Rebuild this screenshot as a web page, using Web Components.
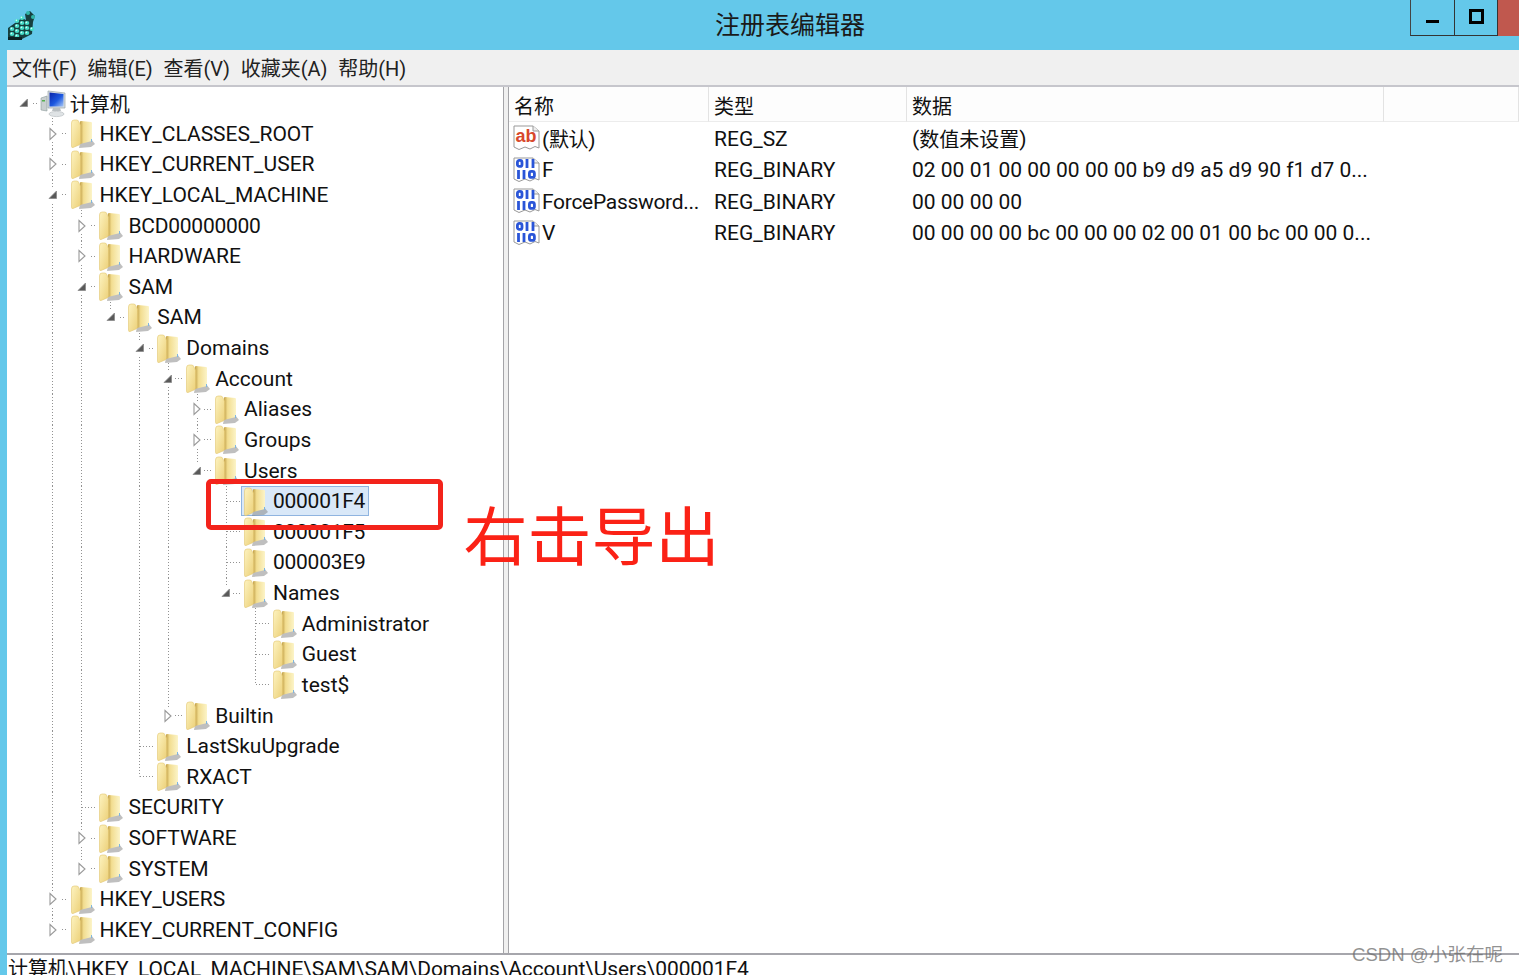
<!DOCTYPE html>
<html lang="zh-CN"><head><meta charset="utf-8"><title>注册表编辑器</title>
<style>
html,body{margin:0;padding:0;width:1519px;height:975px;overflow:hidden;background:#fff}
body{position:relative;font:21px Roboto,"Noto Sans CJK SC",sans-serif;color:#111}
</style></head><body>
<reg-window>
  <title-bar slot="title">注册表编辑器</title-bar>
  <menu-bar slot="menu"></menu-bar>
  <reg-tree slot="tree"></reg-tree>
  <value-list slot="list"></value-list>
  <status-bar slot="status"><span style="font-size:20px">计算机</span>\HKEY_LOCAL_MACHINE\SAM\SAM\Domains\Account\Users\000001F4</status-bar>
</reg-window>
<note-box></note-box>
<note-label>右击导出</note-label>
<water-mark>CSDN @小张在呢</water-mark>
<script>
const cj=s=>s.replace(/[\u4e00-\u9fff]+/g,m=>`<span style="font-size:20px">${m}</span>`);
const define=(name,css,html,init)=>customElements.define(name,class extends HTMLElement{
  connectedCallback(){ if(this.shadowRoot) return;
    const s=this.attachShadow({mode:'open'});
    s.innerHTML=`<style>${css}</style>${typeof html==='function'?html(this):html}`;
    if(init) init(this,s);
  }
});
const folder=`<svg class="ic" width="25" height="30" viewBox="0 0 25 30">
<defs><linearGradient id="fa" x1="0" x2="1" y1="0" y2="1"><stop offset="0" stop-color="#fdf3c0"/><stop offset="1" stop-color="#ecd078"/></linearGradient>
<linearGradient id="fb" x1="0" x2="1" y1="0" y2="0"><stop offset="0" stop-color="#c2a048"/><stop offset=".3" stop-color="#f2dd90"/><stop offset="1" stop-color="#fcf4c8"/></linearGradient></defs>
<path d="M9 24 L20 20 L24 25 L20 28 L8 29Z" fill="#7f7f7f" opacity=".5"/>
<path d="M9 3 Q9 2 10 2 L20 3 Q21 3 21 4 L21 22 L9 25Z" fill="url(#fb)"/>
<path d="M0.5 4 Q0.5 1 3 1 L5.5 1 Q7.5 1 8 3 L9.5 6 L9.5 24 Q9.5 25.5 8 26 L2 28.5 Q0.5 29 0.5 27Z" fill="url(#fa)" stroke="#e2c670" stroke-width=".6"/>
<path d="M20 20 h1 v3 h-1z" fill="#7fb6e0"/>
</svg>`;
const computer=`<svg class="ic root" width="27" height="28" viewBox="0 0 27 28">
<defs><linearGradient id="cs" x1="0" x2="1" y1="0" y2="1"><stop offset="0" stop-color="#0a24a8"/><stop offset=".55" stop-color="#1c58e0"/><stop offset="1" stop-color="#a8c8f5"/></linearGradient></defs>
<path d="M1 8 L7 6 L7 21 L1 20Z" fill="#c9cfcf" stroke="#8b9a9a" stroke-width=".6"/>
<rect x="2" y="10" width="3" height="1.5" fill="#55b04f"/>
<path d="M8 1 L25 3 L25 18 L8 18Z" fill="#d8dde0" stroke="#9aa5aa" stroke-width=".7"/>
<path d="M9.5 2.5 L23.5 4 L23.5 16.5 L9.5 16.5Z" fill="url(#cs)"/>
<path d="M13 18 L20 18 L21 21 L12 21Z" fill="#b9bfc2"/>
<ellipse cx="16.5" cy="24" rx="7.5" ry="2.6" fill="#dfe3e5" stroke="#b0b7ba" stroke-width=".6"/>
</svg>`;
const appIcon=(()=>{let d='';
  const cells=[[2,20],[7,17],[12,14],[2,25],[7,22],[12,19],[2,30],[7,27],[12,24],[17,24],[17,19],[22,20],[7,12],[12,9],[17,14]];
  for(const [x,y] of cells) d+=`<ellipse cx="${x+2}" cy="${y-1}" rx="2.3" ry="2" fill="#46dcc8"/><circle cx="${x+1.4}" cy="${y-1.6}" r=".8" fill="#d0fff4"/>`;
  return `<svg width="28" height="30" viewBox="0 0 28 30"><path d="M0 18 L14 8 L18 10 L17 4 L22 1 L27 6 L25 12 L24 24 L14 29 L0 29Z" fill="#17403f"/>${d}
  <circle cx="20" cy="3" r="2" fill="#2fb7aa"/><circle cx="25" cy="7" r="2" fill="#2fb7aa"/><rect x="0" y="27" width="14" height="3" fill="#0d2222"/></svg>`;})();
const page=(inner)=>`<svg class="v" width="28" height="27" viewBox="0 0 28 27">
<path d="M1 2 H20 L26 7 V24 L22 22.5 L17 25 L12 23 L6 25.5 L1 23Z" fill="#fff" stroke="#999" stroke-width="1"/>
<path d="M20 2 V7 H26" fill="#eee" stroke="#999"/>${inner}</svg>`;
const abIcon=page(`<text x="2.5" y="18" font-family="Liberation Sans" font-size="18" font-weight="700" fill="#d8482c" textLength="21" lengthAdjust="spacingAndGlyphs">ab</text>`);
const binIcon=page(`<g fill="none" stroke="#2a55d8" stroke-width="2.8"><rect x="4.4" y="4.4" width="4.6" height="6" rx="2"/><path d="M14 3v9M20 3v9M5.5 14v9M11 14v9"/><rect x="16.4" y="15.4" width="5" height="6" rx="2"/></g>`);

define('reg-window',`:host{display:flex;flex-direction:column;width:1519px;height:975px;overflow:hidden;background:#64c8ea}
.main{flex:1;display:flex;flex-direction:column;margin-left:7px;min-height:0;background:#f0f0f0}
.body{flex:1;display:flex;min-height:0;border-top:2px solid #c6c6cc}
.split{width:4px;background:#f0f0f0;border-left:1px solid #a4a4a8;border-right:1px solid #a4a4a8}`,
`<slot name="title"></slot><div class="main"><slot name="menu"></slot>
<div class="body"><slot name="tree"></slot><div class="split"></div><slot name="list"></slot></div>
<slot name="status"></slot></div>`);

define('title-bar',`:host{display:flex;align-items:center;height:50px;background:#64c8ea;flex:none;font-size:25px}
.app{flex:none;width:28px;height:30px;margin:0 0 0 8px;display:flex}
.t{flex:1;text-align:center;padding-left:134px;box-sizing:border-box;color:#1a1a1a;margin-top:-5px}
.caps{flex:none;align-self:flex-start;display:flex;height:36px}
.b{display:flex;align-items:center;justify-content:center;height:35px;border-bottom:1.5px solid #333;border-right:1.5px solid #333}
.min{width:43px;border-left:1.5px solid #444}.max{width:42px}
.x{width:21px;height:36px;background:#c0584e}
i{display:block}.min i{width:13px;height:3px;background:#000;margin-top:8px}
.max i{width:9px;height:9px;border:3px solid #000;margin-top:-3px}`,
t=>`<div class="app">${appIcon}</div><div class="t"><slot></slot></div>
<div class="caps"><div class="b min"><i></i></div><div class="b max"><i></i></div><div class="x"></div></div>`);

define('menu-bar',`:host{display:flex;gap:10.7px;align-items:center;height:35px;flex:none;padding:0 0 1px 5px;background:#f0f0f0;font-size:20px;box-sizing:border-box}
span{white-space:nowrap;color:#222}`,
['文件(F)','编辑(E)','查看(V)','收藏夹(A)','帮助(H)'].map(x=>`<span>${x}</span>`).join(''));

const TREE=[[0,'o','计算机'],[1,'c','HKEY_CLASSES_ROOT'],[1,'c','HKEY_CURRENT_USER'],[1,'o','HKEY_LOCAL_MACHINE'],
[2,'c','BCD00000000'],[2,'c','HARDWARE'],[2,'o','SAM'],[3,'o','SAM'],[4,'o','Domains'],[5,'o','Account'],
[6,'c','Aliases'],[6,'c','Groups'],[6,'o','Users'],[7,'','000001F4','s'],[7,'','000001F5'],[7,'','000003E9'],[7,'o','Names'],
[8,'','Administrator'],[8,'','Guest'],[8,'','test$'],[5,'c','Builtin'],[4,'','LastSkuUpgrade'],[4,'','RXACT'],
[2,'','SECURITY'],[2,'c','SOFTWARE'],[2,'c','SYSTEM'],[1,'c','HKEY_USERS'],[1,'c','HKEY_CURRENT_CONFIG']];
const more=(i,l)=>{for(let j=i+1;j<TREE.length;j++){if(TREE[j][0]===l)return true;if(TREE[j][0]<l)return false}return false};

const dotV='repeating-linear-gradient(to bottom,#929292 0 1px,transparent 1px 3px)';
const dotH='repeating-linear-gradient(to right,#929292 0 1px,transparent 1px 3px)';
define('tree-row',`:host{display:flex;align-items:center;height:30.63px;white-space:nowrap}
.c{flex:none;width:28.9px;height:100%;display:flex;align-items:center;justify-content:center}
.g{background:${dotV} center top/1px 100% no-repeat}
.k{background:${dotH} right center/14px 1px no-repeat}
.k.g{background:${dotH} right center/14px 1px no-repeat,${dotV} center top/1px 100% no-repeat}
.k.h{background:${dotH} right center/14px 1px no-repeat,${dotV} center top/1px 50% no-repeat}
.t{flex:none;display:block}
.it{display:inline-flex;align-items:center;height:30px;box-sizing:border-box;margin-left:.3px;padding:0 3px 0 2px;border:1px solid transparent}
:host([selected]) .it{background:#d9e8f8;border-color:#8fb4e0}
.ic{flex:none;margin-right:4px;margin-top:1px;width:25px}.ic.root{margin-left:-2px;margin-right:3px;width:27px}
:host([num]) .it{letter-spacing:-.25px}
`,t=>{const d=+t.getAttribute('depth'),gs=(t.getAttribute('guides')||'').split(' ');let h='';
  for(let l=0;l<d;l++) h+=`<div class="c ${gs.includes(String(l))?'g':''}"></div>`;
  const tog=t.getAttribute('toggle');
  const own=d===0?'':(gs.includes(String(d))?'g':'h');
  const tg=tog==='o'?`<svg class="t" width="14" height="14" viewBox="0 0 14 14"><rect width="14" height="14" fill="#fff"/><path d="M10.5 3 V10.5 H3Z" fill="#595959" stroke="#8a8a8a" stroke-width=".8"/></svg>`:
    tog==='c'?`<svg class="t" width="14" height="16" viewBox="0 0 14 16"><rect width="14" height="16" fill="#fff"/><path d="M4 2.5 L10 8 L4 13.5Z" fill="#fff" stroke="#9a9a9a" stroke-width="1.1"/></svg>`:'';
  h+=`<div class="c k ${own}">${tg}</div>`;
  return h+`<span class="it">${d===0?computer:folder}<span class="tx"><slot></slot></span></span>`;});

define('reg-tree',`:host{display:block;flex:none;width:496px;background:#fff;padding:.7px 0 0 2.5px;box-sizing:border-box;overflow:hidden}`,
TREE.map((r,i)=>{const g=[];for(let l=1;l<=r[0];l++) if(more(i,l)) g.push(l);
  return `<tree-row depth="${r[0]}" toggle="${r[1]}" guides="${g.join(' ')}" ${r[3]?'selected':''} ${/\d{3}/.test(r[2])?'num':''}>${cj(r[2])}</tree-row>`}).join(''));

define('value-list',`:host{display:block;flex:1;background:#fff;overflow:hidden;min-width:0}
.grid{display:grid;grid-template-columns:200px 198px 477px 1fr}
.h{height:35px;box-sizing:border-box;padding:3px 0 0 5px;border-right:1px solid #e3e3e3;border-bottom:1px solid #ececec;display:flex;align-items:center;background:#fdfdfd}
.h:last-child{border-right:0}
.d{height:31.5px;box-sizing:border-box;padding-top:2px;display:flex;align-items:center;padding-left:5px;white-space:nowrap;overflow:hidden}
.n{padding-left:4px;padding-top:0;gap:1px}.n span{letter-spacing:-.3px;margin-top:2px}.v{flex:none}`,
()=>{const R=[[abIcon,'(默认)','REG_SZ','(数值未设置)'],[binIcon,'F','REG_BINARY','02 00 01 00 00 00 00 00 b9 d9 a5 d9 90 f1 d7 0...'],
[binIcon,'ForcePassword...','REG_BINARY','00 00 00 00'],[binIcon,'V','REG_BINARY','00 00 00 00 bc 00 00 00 02 00 01 00 bc 00 00 0...']];
return `<div class="grid"><div class="h">${cj('名称')}</div><div class="h">${cj('类型')}</div><div class="h">${cj('数据')}</div><div class="h"></div>`+
R.map(r=>`<div class="d n">${r[0]}<span>${cj(r[1])}</span></div><div class="d">${r[2]}</div><div class="d">${cj(r[3])}</div><div class="d"></div>`).join('')+`</div>`});

define('status-bar',`:host{display:block;flex:none;height:22px;box-sizing:border-box;background:#fff;border-top:2px solid #a6a6ac;padding-left:1px;white-space:nowrap;line-height:28px;letter-spacing:-.1px;overflow:hidden}`,`<slot></slot>`);

define('note-box',`:host{position:absolute;left:206px;top:479px;width:237px;height:51px;box-sizing:border-box;border:5px solid #f3231b;border-radius:5px}`,``);
define('note-label',`:host{position:absolute;left:463.5px;top:487px;font:64px/90px "Noto Sans CJK SC",sans-serif;color:#fb2216;white-space:nowrap}`,`<slot></slot>`);
define('water-mark',`:host{position:absolute;left:1352px;top:942px;font:18.6px/26px "Liberation Sans","Noto Sans CJK SC",sans-serif;color:rgba(110,110,110,.75);white-space:nowrap}`,`<slot></slot>`);
</script>
</body></html>
